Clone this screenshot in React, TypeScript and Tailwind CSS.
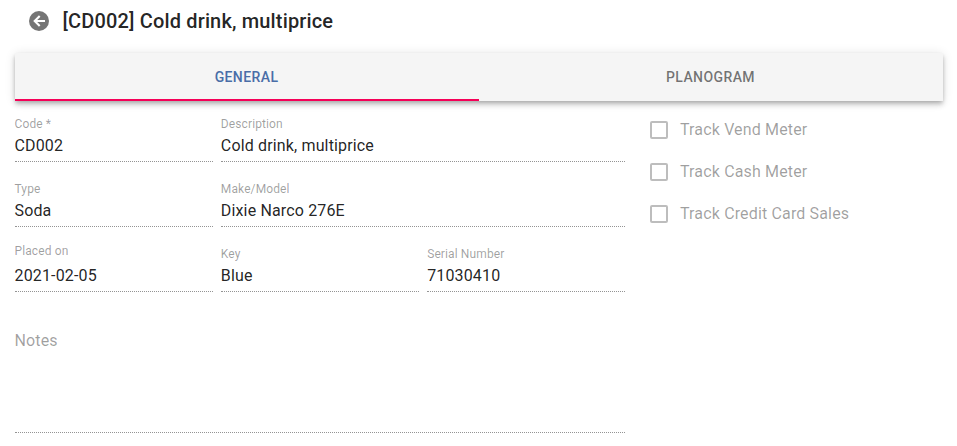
import { clsx } from 'clsx';
import type { ReactNode } from 'react';

const App = () => (
  <div className="min-h-[446px] w-full overflow-hidden bg-white px-[14.5px] font-[Roboto,sans-serif] text-base text-black/87">
    <PageHeader title="[CD002] Cold drink, multiprice" />
    <TabBar />
    <div className="mt-[13px] flex">
      <MachineFields />
      <TrackingOptions />
    </div>
  </div>
);

export default App;

const PageHeader = ({ title }: { title: string }) => (
  <header className="flex h-[53px] items-start pt-[5px] pl-[14.5px]">
    <button type="button" aria-label="Back" className="mt-1.5 mr-[13.5px] text-[#757575]">
      <BackIcon />
    </button>
    <h1 className="text-xl leading-8 font-medium tracking-[0.0075em]">{title}</h1>
  </header>
);

const BackIcon = () => (
  <svg viewBox="0 0 20 20" className="size-5">
    <circle cx="10" cy="10" r="10" fill="currentColor" />
    <path d="M16 10H6M10.7 5 5.7 10l5 5" fill="none" stroke="#fff" strokeWidth="2.1" />
  </svg>
);

const TabBar = () => (
  <nav className="flex h-12 bg-[#f5f5f5] shadow-[0_2px_4px_-1px_rgba(0,0,0,0.2),0_4px_5px_0_rgba(0,0,0,0.14),0_1px_10px_0_rgba(0,0,0,0.12)]">
    <Tab selected>General</Tab>
    <Tab>Planogram</Tab>
  </nav>
);

interface TabProps {
  selected?: boolean;
  children: ReactNode;
}

const Tab = ({ selected, children }: TabProps) => (
  <button
    type="button"
    className={clsx(
      'flex-1 border-b-2 pt-0.5 text-sm font-medium tracking-[0.02857em] uppercase',
      selected ? 'border-[#f50057] text-[#4a6da7]' : 'border-transparent text-black/54',
    )}
  >
    {children}
  </button>
);

const MachineFields = () => (
  <div className="grid w-[611px] grid-cols-3 gap-x-2 gap-y-[17px]">
    <Field label="Code *" value="CD002" />
    <Field label="Description" value="Cold drink, multiprice" className="col-span-2" />
    <Field label="Type" value="Soda" />
    <Field label="Make/Model" value="Dixie Narco 276E" className="col-span-2" />
    <Field label="Placed on" value="2021-02-05" labelClassName="-mt-[3px] mb-[3px]" />
    <Field label="Key" value="Blue" />
    <Field label="Serial Number" value="71030410" />
    <div className="col-span-3 h-[124px] border-b border-dotted border-black/42 pt-5 leading-[23px] tracking-[0.00938em] text-black/38">
      Notes
    </div>
  </div>
);

interface FieldProps {
  label: string;
  value: string;
  className?: string;
  labelClassName?: string;
}

const Field = ({ label, value, className, labelClassName }: FieldProps) => (
  <div className={clsx('h-12 border-b border-dotted border-black/42', className)}>
    <div className={clsx('h-5 pt-0.5 text-xs leading-4 tracking-[0.00938em] text-black/38', labelClassName)}>
      {label}
    </div>
    <div className="leading-[23px] tracking-[0.00938em]">{value}</div>
  </div>
);

const TrackingOptions = () => (
  <div className="-mt-[5px] ml-[24.5px] flex flex-col">
    <Option>Track Vend Meter</Option>
    <Option>Track Cash Meter</Option>
    <Option>Track Credit Card Sales</Option>
  </div>
);

const Option = ({ children }: { children: ReactNode }) => (
  <label className="flex h-[42px] items-center gap-3 tracking-[0.00938em] text-black/38">
    <span className="size-[18px] rounded-xs border-2 border-black/26" />
    {children}
  </label>
);
